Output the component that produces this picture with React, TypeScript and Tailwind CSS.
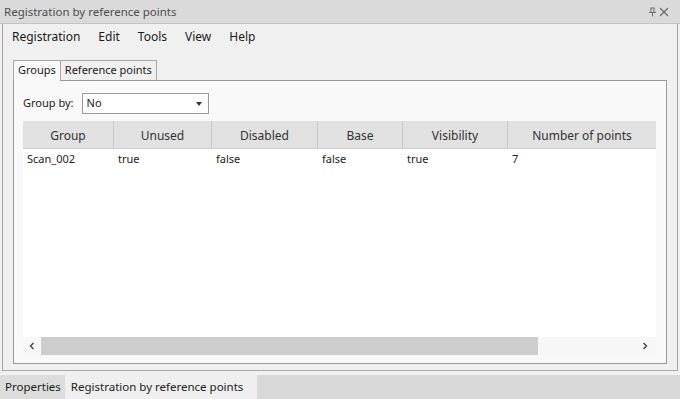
const font = { fontFamily: '"Noto Sans", "Open Sans", sans-serif' };

const columns = [
  { name: "Group", w: "w-[91px]" },
  { name: "Unused", w: "w-[98px]" },
  { name: "Disabled", w: "w-[106px]" },
  { name: "Base", w: "w-[85px]" },
  { name: "Visibility", w: "w-[105px]" },
  { name: "Number of points", w: "w-[148px]" },
];

const row = ["Scan_002", "true", "false", "false", "true", "7"];

function PinIcon() {
  return (
    <svg width="9" height="10" viewBox="0 0 9 10" className="text-[#6b6b6b]">
      <path d="M2.5 1h4M3 1v4.5M6 1v4.5M1 5.5h7M4.5 5.5V9.5" stroke="currentColor" strokeWidth="1" fill="none" />
    </svg>
  );
}

function CloseIcon() {
  return (
    <svg width="10" height="10" viewBox="0 0 10 10" className="text-[#6b6b6b]">
      <path d="M1 1l8 8M9 1L1 9" stroke="currentColor" strokeWidth="1.2" />
    </svg>
  );
}

export default function App() {
  return (
    <div style={font} className="w-[680px] h-[399px] bg-[#f0f0f0] flex flex-col overflow-hidden text-[#1a1a1a]">
      <div className="h-[24px] shrink-0 bg-[#dadada] border-b border-[#c4c4c4] flex items-center justify-between pl-[4px] pr-[11px]">
        <span className="text-[11.5px] text-[#4d4d4d]">Registration by reference points</span>
        <div className="flex items-center gap-[2px]">
          <PinIcon />
          <CloseIcon />
        </div>
      </div>

      <div className="h-[347px] shrink-0 mx-[2px] border-l border-r border-b border-[#a8a8a8] flex flex-col">
        <div className="h-[26px] shrink-0 flex items-center pl-[9px] text-[12px] gap-[18px]">
          <span>Registration</span>
          <span>Edit</span>
          <span>Tools</span>
          <span>View</span>
          <span>Help</span>
        </div>

        <div className="pl-[10px] pt-[10px] flex flex-col">
          <div className="flex h-[20px] text-[11px]">
            <div className="px-[4px] border border-b-0 border-[#a8a8a8] bg-[#f9f9f9] flex items-center relative">
              Groups
              <div className="absolute left-0 right-0 -bottom-[1px] h-[2px] bg-[#f9f9f9]" />
            </div>
            <div className="px-[4px] border border-l-0 border-b-0 border-[#a8a8a8] flex items-center">
              Reference points
            </div>
          </div>

          <div className="w-[654px] h-[284px] border border-[#9a9a9a] bg-[#f9f9f9] px-[9px] pt-[12px] pb-[8px] flex flex-col">
            <div className="flex items-center h-[21px] text-[11px]">
              <span className="mr-[8px]">Group by:</span>
              <div className="w-[127px] h-[21px] border border-[#9a9a9a] bg-white flex items-center justify-between pl-[4px] pr-[6px]">
                <span>No</span>
                <svg width="6" height="4" viewBox="0 0 6 4">
                  <path d="M0 0h6L3 4z" fill="#333" />
                </svg>
              </div>
            </div>

            <div className="mt-[7px] flex-1 w-[633px] bg-white flex flex-col">
              <div className="flex h-[28px] shrink-0 bg-[#e1e1e1] border-b border-[#d0d0d0] text-[12px] text-[#333]">
                {columns.map((c, i) => (
                  <div
                    key={c.name}
                    className={`${c.w} shrink-0 flex items-center justify-center pt-[2px] ${i < columns.length - 1 ? "border-r border-[#c8c8c8]" : ""}`}
                  >
                    {c.name}
                  </div>
                ))}
              </div>
              <div className="flex h-[20px] text-[11px] text-[#222] pt-[1px]">
                {row.map((v, i) => (
                  <div key={i} className={`${columns[i].w} shrink-0 flex items-center pl-[4px]`}>
                    {v}
                  </div>
                ))}
              </div>
              <div className="flex-1" />
              <div className="h-[18px] shrink-0 flex items-center bg-[#f7f7f7]">
                <div className="w-[18px] flex items-center justify-center">
                  <svg width="6" height="8" viewBox="0 0 6 8">
                    <path d="M4.5 1L1.5 4l3 3" stroke="#444" strokeWidth="1.4" fill="none" />
                  </svg>
                </div>
                <div className="w-[497px] h-[18px] bg-[#cdcdcd]" />
                <div className="flex-1" />
                <div className="w-[18px] mr-[2px] flex items-center justify-center">
                  <svg width="6" height="8" viewBox="0 0 6 8">
                    <path d="M1.5 1l3 3-3 3" stroke="#444" strokeWidth="1.4" fill="none" />
                  </svg>
                </div>
              </div>
            </div>
          </div>
        </div>
      </div>

      <div className="flex-1 bg-[#d9d9d9] flex mt-[4px] text-[11.5px]">
        <div className="pl-[5px] pr-[4px] flex items-center bg-[#dcdcdc] text-[#222]">Properties</div>
        <div className="pl-[6px] pr-[14px] flex items-center bg-[#efefef] text-[#222]">Registration by reference points</div>
      </div>
    </div>
  );
}
